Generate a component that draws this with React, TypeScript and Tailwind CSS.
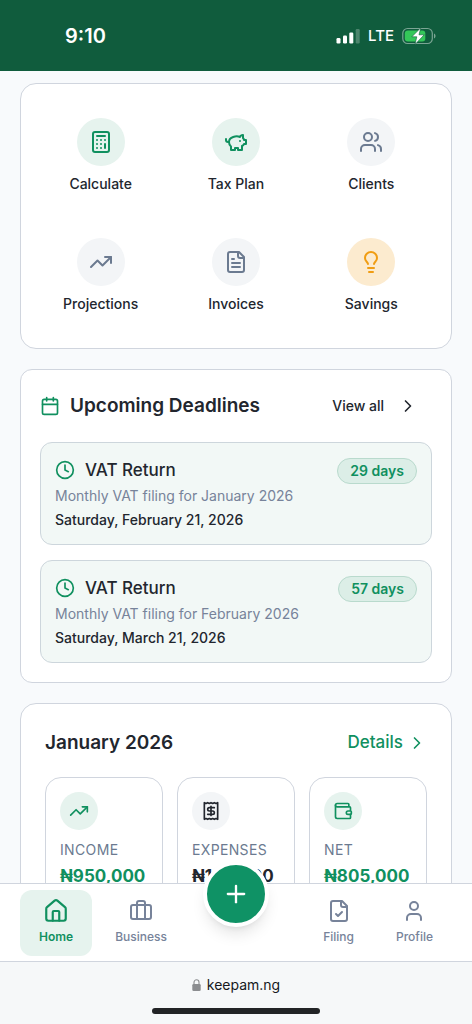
import type { ReactNode } from "react"
import {
    Briefcase,
    Calculator,
    Calendar,
    ChevronRight,
    Clock,
    House,
    Lightbulb,
    Plus,
    Receipt,
    TrendingUp,
    User,
    Users,
    Wallet,
} from "lucide-react"
import clsx from "clsx"

function LineIcon({ className, children }: { className?: string; children: ReactNode }) {
    return (
        <svg
            viewBox="0 0 24 24"
            fill="none"
            stroke="currentColor"
            strokeWidth="2"
            strokeLinecap="round"
            strokeLinejoin="round"
            className={className}
            aria-hidden="true"
        >
            {children}
        </svg>
    )
}

function PiggyIcon({ className }: { className?: string }) {
    return (
        <LineIcon className={className}>
            <path d="M19 5c-1.5 0-2.8 1.4-3 2-3.5-1.5-11-.3-11 5 0 1.8 0 3 2 4.5V20h4v-2h3v2h4v-4c1-.5 1.7-1 2-2h2v-4h-2c0-1-.5-1.5-1-2V5z" />
            <path d="M2 9v1c0 1.1.9 2 2 2h1" />
            <path d="M16 11h.01" />
        </LineIcon>
    )
}

function FileTextIcon({ className }: { className?: string }) {
    return (
        <LineIcon className={className}>
            <path d="M15 2H6a2 2 0 0 0-2 2v16a2 2 0 0 0 2 2h12a2 2 0 0 0 2-2V7Z" />
            <path d="M14 2v4a2 2 0 0 0 2 2h4" />
            <path d="M10 9H8" />
            <path d="M16 13H8" />
            <path d="M16 17H8" />
        </LineIcon>
    )
}

function FileCheckIcon({ className }: { className?: string }) {
    return (
        <LineIcon className={className}>
            <path d="M15 2H6a2 2 0 0 0-2 2v16a2 2 0 0 0 2 2h12a2 2 0 0 0 2-2V7Z" />
            <path d="M14 2v4a2 2 0 0 0 2 2h4" />
            <path d="m9 15 2 2 4-4" />
        </LineIcon>
    )
}

const actions = [
    { label: "Calculate", icon: Calculator, tone: "bg-[#e6f3ee] text-[#10905f]" },
    { label: "Tax Plan", icon: PiggyIcon, tone: "bg-[#e6f3ee] text-[#10905f]" },
    { label: "Clients", icon: Users, tone: "bg-[#f3f5f7] text-[#6b7a90]" },
    { label: "Projections", icon: TrendingUp, tone: "bg-[#f3f5f7] text-[#6b7a90]" },
    { label: "Invoices", icon: FileTextIcon, tone: "bg-[#f3f5f7] text-[#6b7a90]" },
    { label: "Savings", icon: Lightbulb, tone: "bg-[#fcebcf] text-[#f09d13]" },
]

const deadlines = [
    { title: "VAT Return", note: "Monthly VAT filing for January 2026", date: "Saturday, February 21, 2026", left: "29 days" },
    { title: "VAT Return", note: "Monthly VAT filing for February 2026", date: "Saturday, March 21, 2026", left: "57 days" },
]

const totals = [
    { label: "INCOME", value: "₦950,000", icon: TrendingUp, tone: "bg-[#e6f3ee] text-[#10905f]", color: "text-[#10905f]" },
    { label: "EXPENSES", value: "₦145,000", icon: Receipt, tone: "bg-[#f3f5f7] text-[#22262e]", color: "text-[#22262e]" },
    { label: "NET", value: "₦805,000", icon: Wallet, tone: "bg-[#e6f3ee] text-[#10905f]", color: "text-[#10905f]" },
]

function StatusBar() {
    return (
        <header className="flex h-[71px] shrink-0 items-center justify-between bg-[#105c3d] pr-9 pl-[65px] text-white">
            <span className="text-xl leading-6 font-semibold">9:10</span>
            <div className="flex items-center gap-2">
                <svg viewBox="0 0 24 16" className="h-4 w-6" fill="currentColor" aria-hidden="true">
                    <rect x="0.5" y="10" width="4" height="5.5" rx="1.2" />
                    <rect x="7" y="7.5" width="4" height="8" rx="1.2" />
                    <rect x="13.3" y="4.5" width="4" height="11" rx="1.2" />
                    <rect x="19.7" y="1" width="4" height="14.5" rx="1.2" opacity="0.25" />
                </svg>
                <span className="text-[15px] leading-6 font-medium">LTE</span>
                <svg viewBox="0 0 34 18" className="h-[18px] w-[34px]" aria-hidden="true">
                    <rect x="0.8" y="1.5" width="29.5" height="15" rx="4.8" fill="none" stroke="#fff" strokeOpacity="0.45" strokeWidth="1.2" />
                    <rect x="2.8" y="3.5" width="20.5" height="11" rx="3" fill="#34c759" />
                    <path d="M32 6.5c1 .4 1.5 1.4 1.5 2.5s-.5 2.1-1.5 2.5z" fill="#fff" fillOpacity="0.45" />
                    <path d="M18.8 0.8 9.8 9.8h5l-1.8 7.6 9.2-9.6h-5.2z" fill="#fff" stroke="#105c3d" strokeWidth="0.6" />
                </svg>
            </div>
        </header>
    )
}

function QuickActions() {
    return (
        <section className="grid grid-cols-3 gap-6 rounded-2xl border border-[#d0d5de] bg-white p-6">
            {actions.map(({ label, icon: Icon, tone }) => (
                <button key={label} type="button" className="flex flex-col items-center gap-2 py-2.5">
                    <span className={clsx("flex size-12 items-center justify-center rounded-full", tone)}>
                        <Icon className="size-6" />
                    </span>
                    <span className="text-sm font-medium">{label}</span>
                </button>
            ))}
        </section>
    )
}

function Deadlines() {
    return (
        <section className="rounded-xl border border-[#d0d5de] bg-white p-[19px]">
            <div className="flex h-[34px] items-center justify-between pr-3.5">
                <h2 className="flex items-center gap-2.5 text-[19px] font-semibold">
                    <Calendar className="size-5 text-[#10905f]" />
                    Upcoming Deadlines
                </h2>
                <a href="#deadlines" className="flex items-center gap-3.5 text-sm font-medium">
                    View all
                    <ChevronRight className="size-5" />
                </a>
            </div>
            <ul className="mt-[19px] flex flex-col gap-[15px]">
                {deadlines.map((d) => (
                    <li key={d.note} className="flex items-start justify-between rounded-xl border border-[#cdd6dc] bg-[#f2f8f6] px-3.5 pt-[15px] pb-3">
                        <div className="leading-6">
                            <h3 className="flex items-center gap-2.5 text-[17px] leading-6 font-medium">
                                <Clock className="size-5 text-[#10905f]" />
                                {d.title}
                            </h3>
                            <p className="mt-0.5 text-sm leading-6 text-[#77839a]">{d.note}</p>
                            <p className="text-sm leading-6 font-medium">{d.date}</p>
                        </div>
                        <span className="rounded-full border border-[#b9dacd] bg-[#dceee7] px-3 py-0.5 text-sm font-semibold text-[#10905f]">
                            {d.left}
                        </span>
                    </li>
                ))}
            </ul>
        </section>
    )
}

function MonthSummary() {
    return (
        <section className="rounded-2xl border border-[#d0d5de] bg-white p-6">
            <div className="flex h-[30px] items-center justify-between">
                <h2 className="text-[19px] font-semibold">January 2026</h2>
                <a href="#details" className="flex items-center gap-1 text-[17px] font-medium text-[#10905f]">
                    Details
                    <ChevronRight className="size-5" />
                </a>
            </div>
            <div className="mt-[19px] grid grid-cols-3 gap-3.5">
                {totals.map(({ label, value, icon: Icon, tone, color }) => (
                    <div key={label} className="rounded-2xl border border-[#d0d5de] p-3.5">
                        <span className={clsx("flex size-[38px] items-center justify-center rounded-full", tone)}>
                            <Icon className="size-5" />
                        </span>
                        <p className="mt-2 text-sm leading-6 tracking-wide text-[#6b7a90]">{label}</p>
                        <p className={clsx("mt-0.5 text-[17px] leading-6 font-bold", color)}>{value}</p>
                    </div>
                ))}
            </div>
        </section>
    )
}

function NavItem({ label, active, children }: { label: string; active?: boolean; children: ReactNode }) {
    return (
        <a
            href={`#${label.toLowerCase()}`}
            aria-current={active ? "page" : undefined}
            className={clsx(
                "flex h-[66px] flex-col items-center justify-center gap-[5px] rounded-xl px-[19px] pb-0.5 text-xs",
                active ? "bg-[#e6f3ee] font-semibold text-[#10905f]" : "font-medium text-[#77839a]",
            )}
        >
            <span className="flex h-[26px] items-center">{children}</span>
            {label}
        </a>
    )
}

function BottomNav() {
    return (
        <nav className="relative flex h-[79px] shrink-0 items-center justify-between border-y border-[#d0d5de] bg-white px-5">
            <div className="flex gap-1">
                <NavItem label="Home" active>
                    <House className="size-[26px]" />
                </NavItem>
                <NavItem label="Business">
                    <Briefcase className="size-6" />
                </NavItem>
            </div>
            <div className="flex gap-1">
                <NavItem label="Filing">
                    <FileCheckIcon className="size-6" />
                </NavItem>
                <NavItem label="Profile">
                    <User className="size-6" />
                </NavItem>
            </div>
            <button
                type="button"
                aria-label="Add"
                className="absolute -top-[23px] left-1/2 flex size-[66px] -translate-x-1/2 items-center justify-center rounded-full border-4 border-white bg-[#0f9265] text-white shadow-lg"
            >
                <Plus className="size-7" />
            </button>
        </nav>
    )
}

function BrowserBar() {
    return (
        <footer className="flex h-[62px] shrink-0 flex-col items-center justify-between bg-[#f6f8f9] pt-[11px] pb-2.5">
            <div className="flex items-center gap-1.5 text-sm leading-6 text-[#16181c]">
                <svg viewBox="0 0 9 12" className="h-3 w-[9px]" aria-hidden="true">
                    <rect x="0.3" y="5" width="8.4" height="7" rx="1.3" fill="#8b8d90" />
                    <path d="M2 5.5V3.3a2.5 2.5 0 0 1 5 0v2.2" fill="none" stroke="#8b8d90" strokeWidth="1.1" />
                </svg>
                keepam.ng
            </div>
            <div className="h-1.5 w-[168px] rounded-full bg-[#222426]" />
        </footer>
    )
}

export default function App() {
    return (
        <div className="flex h-screen flex-col bg-[#f8fafc] font-['Inter',sans-serif] text-[#22262e]">
            <StatusBar />
            <main className="flex min-h-0 flex-1 flex-col overflow-hidden">
                <div className="flex flex-col gap-5 px-5 pt-3">
                    <QuickActions />
                    <Deadlines />
                    <MonthSummary />
                </div>
            </main>
            <BottomNav />
            <BrowserBar />
        </div>
    )
}
